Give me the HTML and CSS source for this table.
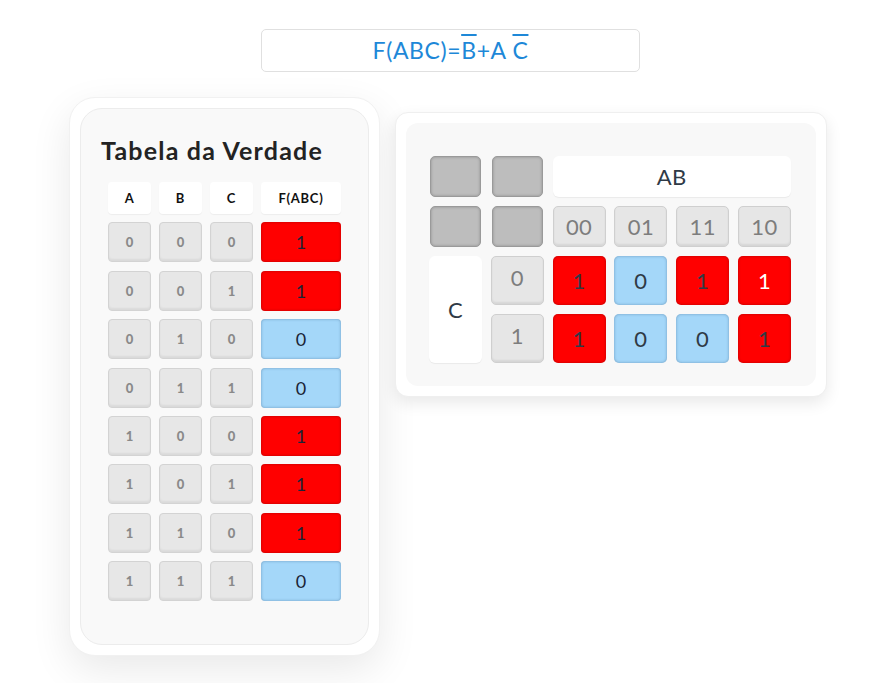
FILE: index.html
```html
<!DOCTYPE html>
<html lang="pt">
<head>
<meta charset="utf-8">
<title>Tabela da Verdade</title>
<link rel="stylesheet" href="styles.css">
</head>
<body>
<div class="formula">F(ABC)=<span class="ov">B</span>+A <span class="ov">C</span></div>
<div class="cards">
  <div class="card-left">
    <div class="panel-left">
      <h1 class="title">Tabela da Verdade</h1>
      <div class="truth">
        <div class="hd">A</div><div class="hd">B</div><div class="hd">C</div><div class="hd">F(ABC)</div>
        <div class="in">0</div><div class="in">0</div><div class="in">0</div><div class="out red">1</div>
        <div class="in">0</div><div class="in">0</div><div class="in">1</div><div class="out red">1</div>
        <div class="in">0</div><div class="in">1</div><div class="in">0</div><div class="out blue">0</div>
        <div class="in">0</div><div class="in">1</div><div class="in">1</div><div class="out blue">0</div>
        <div class="in">1</div><div class="in">0</div><div class="in">0</div><div class="out red">1</div>
        <div class="in">1</div><div class="in">0</div><div class="in">1</div><div class="out red">1</div>
        <div class="in">1</div><div class="in">1</div><div class="in">0</div><div class="out red">1</div>
        <div class="in">1</div><div class="in">1</div><div class="in">1</div><div class="out blue">0</div>
      </div>
    </div>
  </div>
  <div class="card-right">
    <div class="panel-right">
      <div class="kmap">
        <div class="blank"></div><div class="blank"></div><div class="hdr ab">AB</div>
        <div class="blank"></div><div class="blank"></div>
        <div class="lbl">00</div><div class="lbl">01</div><div class="lbl">11</div><div class="lbl">10</div>
        <div class="hdr cvar">C</div>
        <div class="lbl top">0</div>
        <div class="val red">1</div><div class="val blue">0</div><div class="val red">1</div><div class="val red white">1</div>
        <div class="lbl top">1</div>
        <div class="val red">1</div><div class="val blue">0</div><div class="val blue">0</div><div class="val red">1</div>
      </div>
    </div>
  </div>
</div>
</body>
</html>
```
FILE: styles.css
```css
* { box-sizing: border-box; }
html, body { margin: 0; padding: 0; background: #ffffff; }
body {
  font-family: Lato, "Noto Sans", sans-serif;
  width: 890px;
  height: 683px;
  overflow: hidden;
}
.formula {
  margin: 29px 0 0 261px;
  width: 379px;
  height: 43px;
  border: 1px solid #e0e0e0;
  border-radius: 5px;
  color: #1e88d8;
  font-size: 23px;
  letter-spacing: 0.6px;
  line-height: 41px;
  text-align: center;
}
.ov {
  text-decoration: overline;
  text-decoration-thickness: 2px;
}
.cards {
  display: flex;
  align-items: flex-start;
  gap: 15px;
  margin-top: 25px;
  padding-left: 69px;
}
.card-left {
  width: 311px;
  height: 559px;
  padding: 10px;
  background: #fff;
  border: 1px solid #f1f1f1;
  border-radius: 26px;
  box-shadow: 0 14px 40px rgba(0, 0, 0, 0.09);
}
.panel-left {
  height: 100%;
  background: #f9f9f9;
  border: 1px solid #ececec;
  border-radius: 22px;
  padding-top: 26px;
}
.title {
  margin: 0 0 0 20px;
  font-size: 25px;
  letter-spacing: 1.2px;
  line-height: 30px;
  font-weight: 700;
  color: #232323;
}
.truth {
  margin-top: 17px;
  display: grid;
  grid-template-columns: 43px 43px 43px 80px;
  grid-template-rows: 32px repeat(8, 40px);
  column-gap: 8px;
  row-gap: 8.4px;
  justify-content: center;
}
.hd {
  background: #fff;
  border-radius: 4px;
  box-shadow: 0 1px 1px rgba(0, 0, 0, 0.05);
  display: flex;
  align-items: center;
  justify-content: center;
  font-size: 13px;
  letter-spacing: 0.7px;
  font-weight: 700;
  color: #111;
}
.in {
  background: #e7e7e7;
  border: 1px solid #d3d3d3;
  border-radius: 4px;
  box-shadow: inset 0 -2px 2px rgba(0, 0, 0, 0.06);
  display: flex;
  align-items: center;
  justify-content: center;
  font-size: 13px;
  font-weight: 900;
  color: #8a8a8a;
}
.out {
  border-radius: 4px;
  display: flex;
  align-items: center;
  justify-content: center;
  font-size: 18px;
  color: #1b2436;
}
.red {
  background: #ff0000;
  box-shadow: inset 0 0 3px rgba(90, 0, 0, 0.45);
}
.blue {
  background: #a4d7f9;
  box-shadow: inset 0 0 3px rgba(40, 80, 120, 0.45);
}
.card-right {
  margin-top: 15px;
  width: 432px;
  height: 285px;
  padding: 10px;
  background: #fff;
  border: 1px solid #efefef;
  border-radius: 13px;
  box-shadow: 0 6px 16px rgba(0, 0, 0, 0.09);
}
.panel-right {
  height: 100%;
  background: #f8f8f8;
  border-radius: 12px;
  padding: 33px 0 0 23px;
}
.kmap {
  display: grid;
  grid-template-columns: repeat(6, 53px);
  grid-template-rows: 41px 41px 49px 49px;
  column-gap: 8.8px;
  row-gap: 9px;
  font-size: 22px;
  letter-spacing: 0.4px;
}
.blank {
  margin: 0 1px 0 1px;
  background: #bdbdbd;
  border: 1px solid #9a9a9a;
  border-radius: 5px;
  box-shadow: inset 0 0 3px rgba(0, 0, 0, 0.25);
}
.hdr {
  background: #fff;
  border-radius: 6px;
  box-shadow: 0 1px 1px rgba(0, 0, 0, 0.06);
  display: flex;
  align-items: center;
  justify-content: center;
  color: #2f3a46;
}
.ab { grid-column: 3 / span 4; }
.cvar { grid-row: 3 / span 2; grid-column: 1; }
.lbl {
  background: #e6e6e6;
  border: 1px solid #cfcfcf;
  border-radius: 5px;
  box-shadow: inset 0 -2px 2px rgba(0, 0, 0, 0.07);
  display: flex;
  align-items: center;
  justify-content: center;
  color: #7d7d7d;
}
.lbl.top { align-items: flex-start; padding-top: 7px; }
.val {
  border-radius: 5px;
  display: flex;
  align-items: center;
  justify-content: center;
  color: #2f3a46;
}
.val.white { color: #fff; }
```
